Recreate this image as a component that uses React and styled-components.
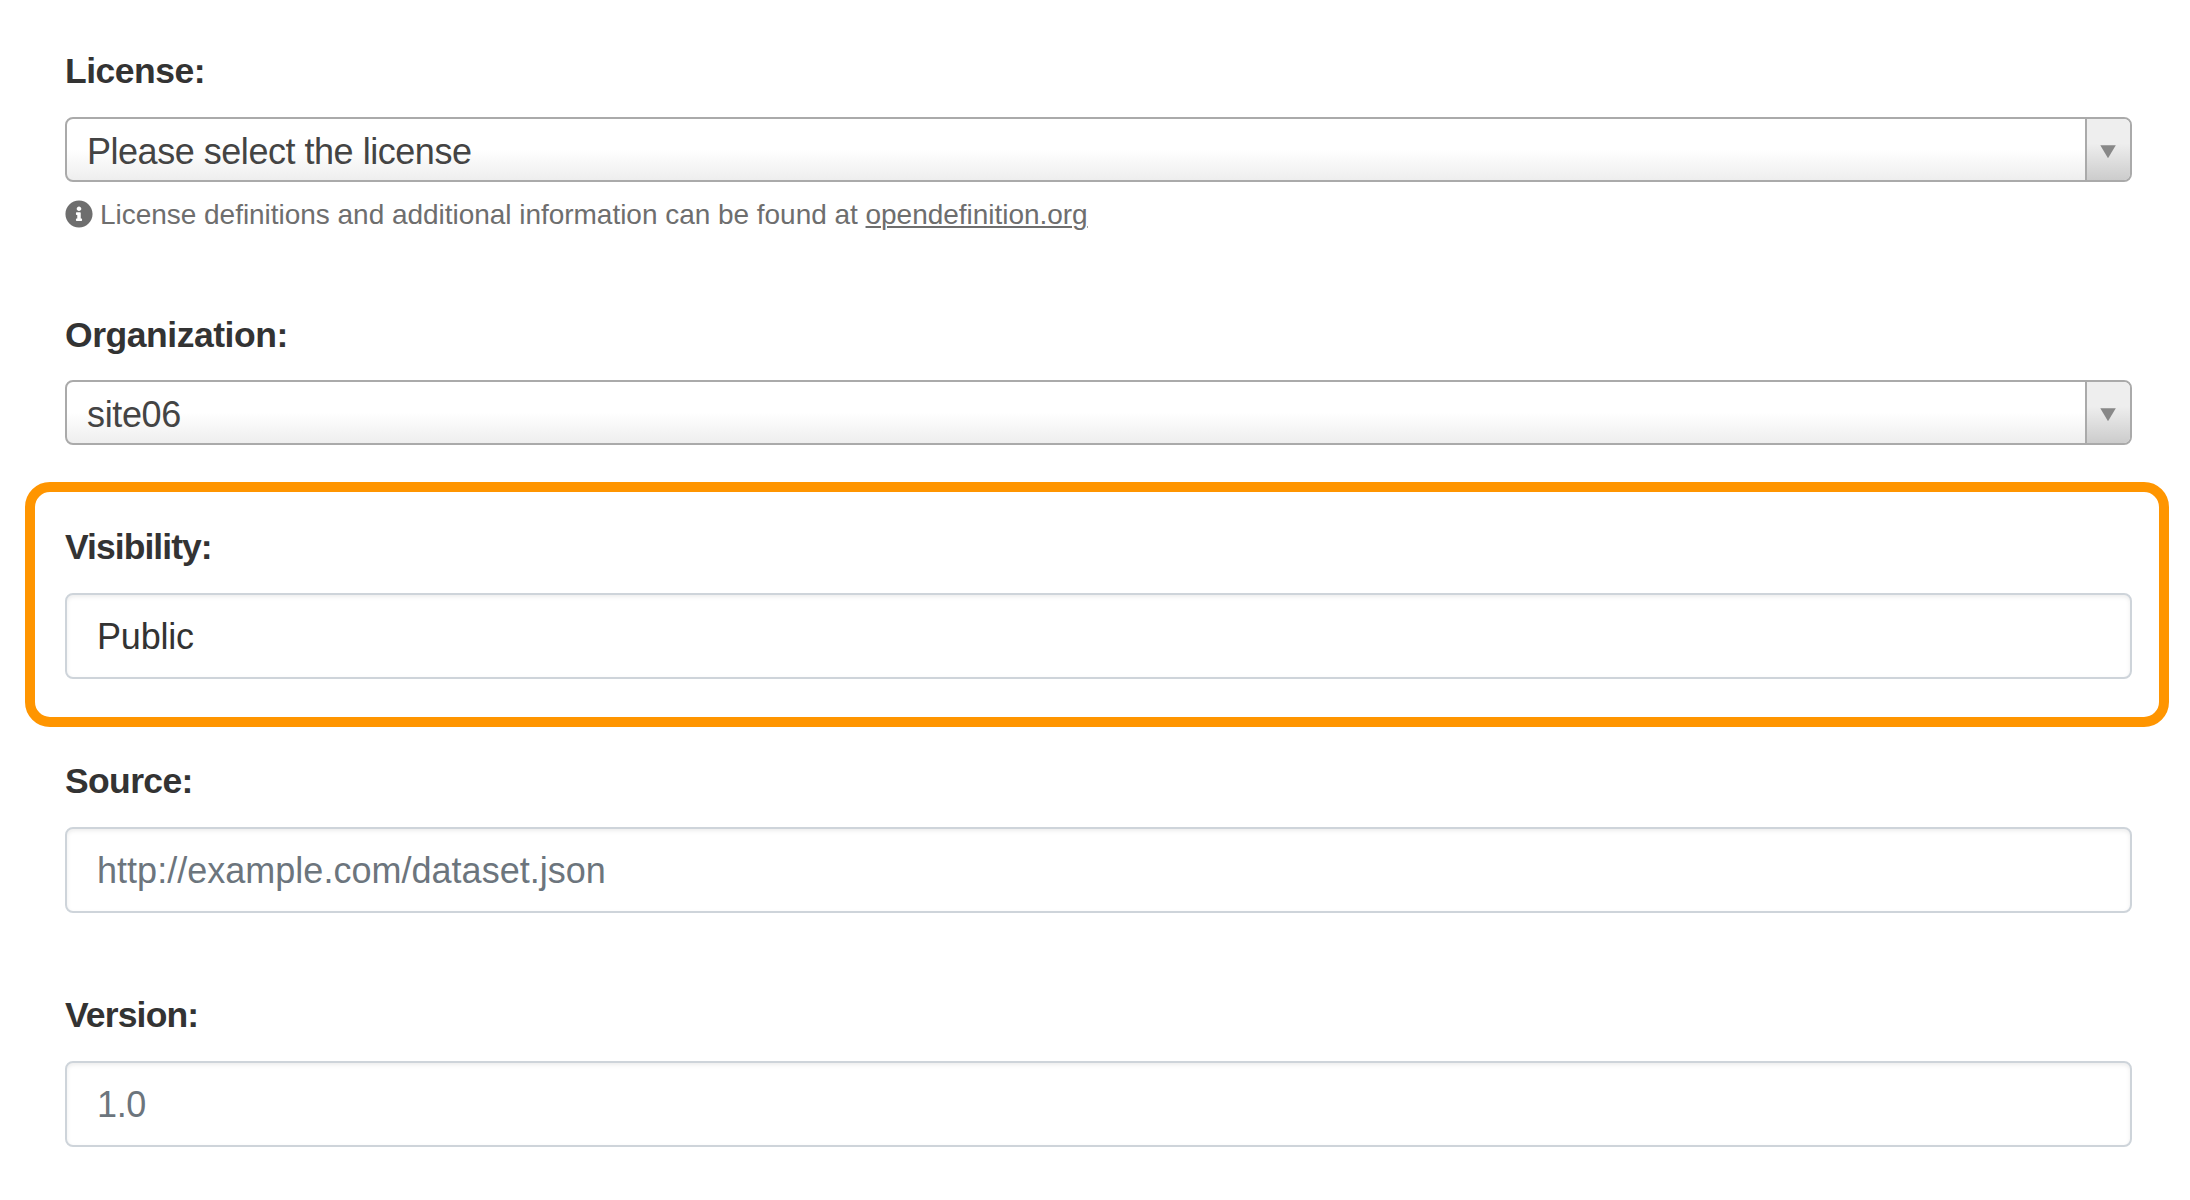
import React from "react";
import styled, { createGlobalStyle } from "styled-components";

const GlobalStyle = createGlobalStyle`
  *, *::before, *::after { box-sizing: border-box; }
  body {
    margin: 0;
    background: #fff;
    color: #333;
    font-family: "Liberation Sans", Arial, Helvetica, sans-serif;
    font-size: 36px;
    overflow: hidden;
  }
`;

const Form = styled.main`
  display: flex;
  flex-direction: column;
  width: 2190px;
  height: 1200px;
  padding: 44px 58px 0 65px;
`;

const Group = styled.section`
  display: flex;
  flex-direction: column;
  margin-top: ${(p) => p.$space || 0}px;
`;

const Highlighted = styled(Group)`
  margin: 37px -37px 27px -40px;
  padding: 28px 27px 38px 30px;
  border: 10px solid #ff9500;
  border-radius: 25px;
`;

const Label = styled.div`
  height: 54px;
  margin-bottom: ${(p) => p.$gap || 19}px;
  line-height: 55px;
  font-size: 35.5px;
  font-weight: 700;
  white-space: nowrap;
  letter-spacing: ${(p) => p.$tracking}px;
`;

const Select = styled.div`
  display: flex;
  height: 65px;
  border: 2px solid #aaa;
  border-radius: 8px;
  background: linear-gradient(to top, #eee 0%, #fff 50%);
  color: #444;
  overflow: hidden;
`;

const SelectValue = styled.span`
  flex: 1;
  padding-left: 20px;
  line-height: 66px;
  white-space: nowrap;
  letter-spacing: ${(p) => p.$tracking}px;
`;

const SelectArrow = styled.span`
  display: flex;
  width: 45px;
  padding: 26px 0 0 13px;
  border-left: 2px solid #aaa;
  background: linear-gradient(to top, #ccc 0%, #eee 60%);
`;

const Input = styled.div`
  height: 86px;
  padding-left: 30px;
  border: 2px solid #ced4da;
  border-radius: 8px;
  box-shadow: inset 0 2px 4px rgba(0, 0, 0, 0.075);
  line-height: 84px;
  white-space: nowrap;
  color: ${(p) => (p.$placeholder ? "#6c757d" : "#333")};
  letter-spacing: ${(p) => p.$tracking}px;
`;

const Help = styled.div`
  display: flex;
  align-items: center;
  height: 42px;
  margin-top: 11px;
  color: #6e6e6e;
  font-size: 28px;
  line-height: 42px;
  white-space: pre;
  letter-spacing: -0.03px;
`;

const HelpText = styled.span`
  padding-top: 2px;
`;

const InfoIcon = styled.svg`
  width: 28px;
  height: 28px;
  margin: 0 7px 0 0;
`;

const HelpLink = styled.a`
  color: inherit;
  text-decoration: underline;
  text-decoration-thickness: 2px;
  text-underline-offset: 2px;
`;

function Dropdown({ value, tracking }) {
  return (
    <Select>
      <SelectValue $tracking={tracking}>{value}</SelectValue>
      <SelectArrow>
        <svg width="16" height="14" viewBox="0 0 16 14">
          <path d="M0.3 0.3H15.8L8 13.3Z" fill="#888" />
        </svg>
      </SelectArrow>
    </Select>
  );
}

export default function App() {
  return (
    <>
      <GlobalStyle />
      <Form>
        <Group>
          <Label $tracking={-0.5}>License:</Label>
          <Dropdown value="Please select the license" tracking={-0.47} />
          <Help>
            <InfoIcon viewBox="0 0 512 512" fill="currentColor">
              <path d="M256 8C119 8 8 119 8 256s111 248 248 248 248-111 248-248S393 8 256 8zm0 110c23.200 0 42 18.800 42 42s-18.800 42-42 42-42-18.800-42-42 18.800-42 42-42zm56 254c0 6.600-5.400 12-12 12h-88c-6.600 0-12-5.400-12-12v-24c0-6.600 5.400-12 12-12h12v-64h-12c-6.600 0-12-5.400-12-12v-24c0-6.600 5.400-12 12-12h64c6.600 0 12 5.400 12 12v100h12c6.600 0 12 5.400 12 12v24z" />
            </InfoIcon>
            <HelpText>
              License definitions and additional information can be found at{" "}
              <HelpLink>opendefinition.org</HelpLink>
            </HelpText>
          </Help>
        </Group>

        <Group $space={73}>
          <Label $tracking={-0.46} $gap={18}>
            Organization:
          </Label>
          <Dropdown value="site06" tracking={-0.36} />
        </Group>

        <Highlighted>
          <Label $tracking={-0.95}>Visibility:</Label>
          <Input $tracking={-0.2}>Public</Input>
        </Highlighted>

        <Group>
          <Label $tracking={-0.63}>Source:</Label>
          <Input $placeholder $tracking={0.02}>
            http://example.com/dataset.json
          </Input>
        </Group>

        <Group $space={75}>
          <Label $tracking={-0.85}>Version:</Label>
          <Input $placeholder $tracking={-0.36}>
            1.0
          </Input>
        </Group>
      </Form>
    </>
  );
}
